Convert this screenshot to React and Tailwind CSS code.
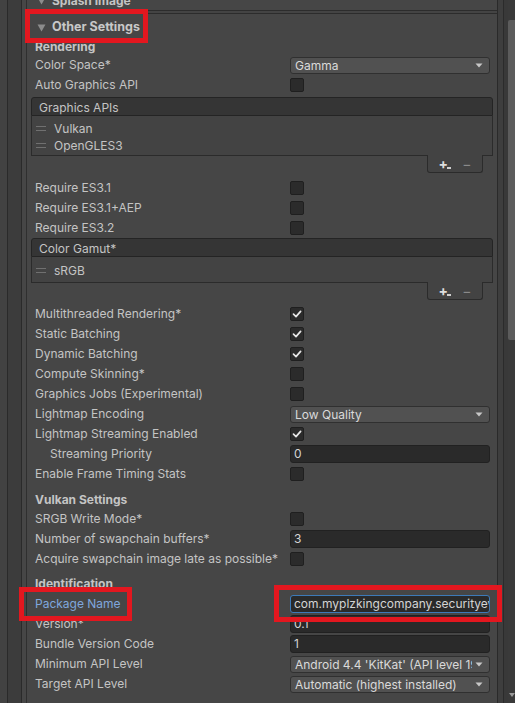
import React from 'react';

const Check = () => (
  <svg width="10" height="10" viewBox="0 0 10 10" className="block">
    <path d="M1.5 5.2 L4 7.6 L8.6 2.4" fill="none" stroke="#e6e6e6" strokeWidth="1.7" strokeLinecap="round" strokeLinejoin="round" />
  </svg>
);

const Arrow = () => (
  <svg width="8" height="5" viewBox="0 0 8 5" className="block">
    <path d="M0.5 0.5 L7.5 0.5 L4 4.5 Z" fill="#c8c8c8" />
  </svg>
);

const Checkbox = ({ checked }) => (
  <div className="w-[14px] h-[14px] rounded-[2px] bg-[#2b2b2b] border border-[#1f1f1f] flex items-center justify-center">
    {checked && <Check />}
  </div>
);

const Input = ({ value, focus }) => (
  <div
    className={
      focus
        ? 'w-[200px] h-[18px] rounded-[3px] bg-[#2a2a2a] border border-[#3d7ab8] px-[3px] leading-[16px] text-[#d4d4d4] overflow-hidden whitespace-nowrap'
        : 'w-[200px] h-[18px] rounded-[3px] bg-[#2a2a2a] border border-[#212121] px-[3px] leading-[16px] text-[#d4d4d4] overflow-hidden whitespace-nowrap'
    }
  >
    {value}
  </div>
);

const Dropdown = ({ value }) => (
  <div className="w-[200px] h-[17px] rounded-[3px] bg-[#515151] border border-[#303030] flex items-center pl-[4px] pr-[6px] gap-[3px]">
    <span className="flex-1 overflow-hidden whitespace-nowrap text-[#dadada] leading-[15px]">{value}</span>
    <Arrow />
  </div>
);

const Row = ({ label, children, indent, blue }) => (
  <div className="flex items-center h-[20px] pl-[8px]">
    <div
      className={
        (indent ? 'pl-[15px] ' : '') +
        (blue ? 'text-[#7fa6dd] ' : 'text-[#c4c4c4] ') +
        'w-[255px] whitespace-nowrap'
      }
    >
      {label}
    </div>
    {children}
  </div>
);

const Heading = ({ children, className }) => (
  <div className={'flex items-center h-[19px] pl-[8px] font-bold text-[#c4c4c4] ' + (className || '')}>{children}</div>
);

const Handle = () => (
  <div className="flex flex-col gap-[3px] w-[10px]">
    <div className="h-px bg-[#707070]" />
    <div className="h-px bg-[#707070]" />
  </div>
);

const ReorderList = ({ title, items, bodyClass }) => (
  <div className="mx-[4px]">
    <div className="h-[19px] bg-[#353535] border border-[#242424] rounded-t-[3px] flex items-center pl-[7px] pt-[2px] text-[#c4c4c4]">
      {title}
    </div>
    <div className={'bg-[#434343] border-x border-b border-[#2b2b2b] ' + bodyClass}>
      {items.map((it) => (
        <div key={it} className="h-[17px] flex items-center pl-[4px] gap-[8px] text-[#c4c4c4]">
          <Handle />
          <span>{it}</span>
        </div>
      ))}
    </div>
    <div className="flex justify-end pr-[10px]">
      <div className="w-[56px] h-[18px] -mt-px bg-[#434343] border-x border-b border-[#2b2b2b] rounded-b-[3px] flex items-center justify-center gap-[14px]">
        <span className="relative text-[#dedede] font-bold text-[14px] leading-none">
          +
          <span className="absolute left-[8px] top-[10px] w-[4px] h-[2px] bg-[#cfcfcf]" />
        </span>
        <span className="text-[#8a8a8a] text-[14px] leading-none">−</span>
      </div>
    </div>
  </div>
);

export default function App() {
  return (
    <div className="relative w-[515px] h-[703px] overflow-hidden bg-[#3e3e3e] flex font-[Inter,sans-serif] text-[12px]">
      {/* left gutters */}
      <div className="w-[7px] bg-[#424242]" />
      <div className="w-px bg-[#2a2a2a]" />
      <div className="w-[13px] bg-[#3c3c3c]" />
      <div className="w-px bg-[#2a2a2a]" />
      <div className="w-[4px] bg-[#464646]" />
      <div className="w-px bg-[#2f2f2f]" />

      {/* main column */}
      <div className="w-[470px] flex flex-col bg-[#464646]">
        <div className="h-[11px] overflow-hidden border-b border-[#2c2c2c]">
          <div className="-mt-[8px] flex items-center h-[18px] pl-[10px] gap-[6px] font-bold text-[#c4c4c4]">
            <svg width="9" height="8" viewBox="0 0 9 8"><path d="M0.5 0.5 L8.5 0.5 L4.5 7.5 Z" fill="#8c8c8c" /></svg>
            Splash Image
          </div>
        </div>
        <div className="h-[2px] bg-[#444444]" />
        <div className="flex-1 border-t border-[#2c2c2c]">
          <div className="h-[22px] flex items-center pl-[10px] pt-[5px] gap-[6px] font-bold text-[#c8c8c8] text-[12.5px]">
            <svg width="9" height="8" viewBox="0 0 9 8"><path d="M0.5 0.5 L8.5 0.5 L4.5 7.5 Z" fill="#8c8c8c" /></svg>
            Other Settings
          </div>
          <Heading className="pt-[2px]">Rendering</Heading>
          <Row label="Color Space*"><Dropdown value="Gamma" /></Row>
          <Row label="Auto Graphics API"><Checkbox /></Row>
          <div className="mt-[2px]">
            <ReorderList title="Graphics APIs" items={['Vulkan', 'OpenGLES3']} bodyClass="h-[40px] pt-[4px]" />
          </div>
          <div className="mt-[5px]">
            <Row label="Require ES3.1"><Checkbox /></Row>
            <Row label="Require ES3.1+AEP"><Checkbox /></Row>
            <Row label="Require ES3.2"><Checkbox /></Row>
          </div>
          <ReorderList title="Color Gamut*" items={['sRGB']} bodyClass="h-[26px] pt-[5px]" />
          <div className="mt-[4px]">
            <Row label="Multithreaded Rendering*"><Checkbox checked /></Row>
            <Row label="Static Batching"><Checkbox checked /></Row>
            <Row label="Dynamic Batching"><Checkbox checked /></Row>
            <Row label="Compute Skinning*"><Checkbox /></Row>
            <Row label="Graphics Jobs (Experimental)"><Checkbox /></Row>
            <Row label="Lightmap Encoding"><Dropdown value="Low Quality" /></Row>
            <Row label="Lightmap Streaming Enabled"><Checkbox checked /></Row>
            <Row label="Streaming Priority" indent><Input value="0" /></Row>
            <Row label="Enable Frame Timing Stats"><Checkbox /></Row>
          </div>
          <Heading className="mt-[6px]">Vulkan Settings</Heading>
          <Row label="SRGB Write Mode*"><Checkbox /></Row>
          <Row label="Number of swapchain buffers*"><Input value="3" /></Row>
          <Row label="Acquire swapchain image late as possible*"><Checkbox /></Row>
          <Heading className="mt-[5px] h-[20px]">Identification</Heading>
          <Row label="Package Name" blue><Input value="com.myplzkingcompany.securityevent" focus /></Row>
          <Row label="Version*"><Input value="0.1" /></Row>
          <Row label="Bundle Version Code"><Input value="1" /></Row>
          <Row label="Minimum API Level"><Dropdown value="Android 4.4 'KitKat' (API level 19)" /></Row>
          <Row label="Target API Level"><Dropdown value="Automatic (highest installed)" /></Row>
        </div>
      </div>

      {/* right side + scrollbar */}
      <div className="w-px bg-[#2a2a2a]" />
      <div className="w-[5px] bg-[#3e3e3e]" />
      <div className="w-px bg-[#2b2b2b]" />
      <div className="w-[4px] bg-[#393939]" />
      <div className="flex-1 flex flex-col bg-[#3a3a3a]">
        <div className="h-[20px]" />
        <div className="h-[320px] bg-[#5c5c5c] rounded-l-[2px]" />
        <div className="flex-1" />
        <div className="h-[12px] flex items-start justify-center pt-[2px]">
          <svg width="6" height="5" viewBox="0 0 6 5"><path d="M0 0 L6 0 L3 4 Z" fill="#9a9a9a" /></svg>
        </div>
      </div>

      {/* highlight boxes */}
      <div className="absolute left-[25px] top-[9px] w-[123px] h-[34px] border-[5px] border-[#e3171f]" />
      <div className="absolute left-[19px] top-[587px] w-[113px] h-[34px] border-[5px] border-[#e3171f]" />
      <div className="absolute left-[274px] top-[585px] w-[228px] h-[37px] border-[5px] border-[#e3171f]" />
    </div>
  );
}
